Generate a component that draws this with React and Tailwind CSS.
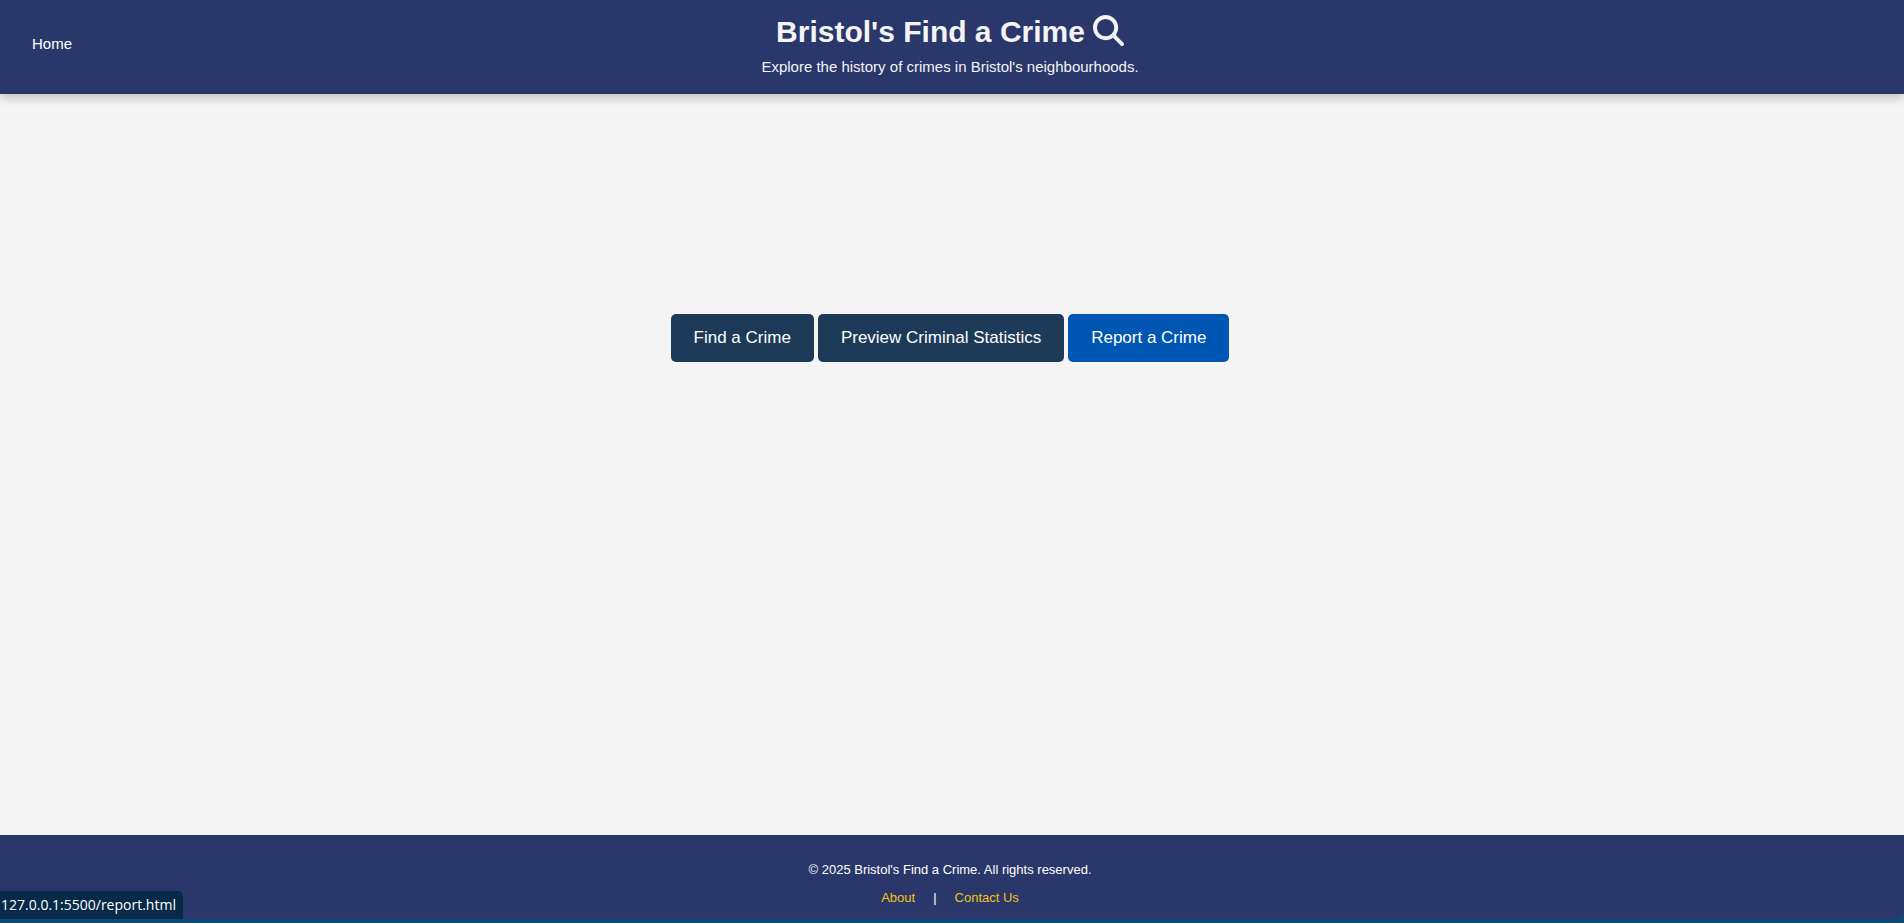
import { FaMagnifyingGlass } from "react-icons/fa6";

export default function App() {
  return (
    <div className="flex min-h-screen flex-col bg-[#0a4a7a] font-['Liberation_Sans',Arial,sans-serif] text-[#f4f4f4]">
      <header className="relative z-10 flex items-start justify-center bg-[#2a376b] pb-[15px] pr-1 pt-3 shadow-[0_4px_10px_rgba(0,0,0,0.2)]">
        <nav className="absolute left-8 top-8">
          <a href="#home" className="text-[15px] leading-6 text-white">Home</a>
        </nav>
        <div className="flex flex-col items-center">
          <h1 className="flex items-start gap-2 text-[30px] font-bold leading-10">
            Bristol's Find a Crime <FaMagnifyingGlass aria-hidden="true" className="mt-[3px] size-[31px]" />
          </h1>
          <p className="mt-[3px] text-[15px] leading-6">Explore the history of crimes in Bristol's neighbourhoods.</p>
        </div>
      </header>
      <main className="flex grow flex-wrap content-start items-start justify-center gap-1 bg-[#f4f4f4] pr-1 pt-[220px] text-[17px] leading-6 text-white">
        <a href="#find" className="rounded-[5px] bg-[#1d3a58] px-[23px] py-3">Find a Crime</a>
        <a href="#stats" className="rounded-[5px] bg-[#1d3a58] px-[23px] py-3">Preview Criminal Statistics</a>
        <a href="#report" className="rounded-[5px] bg-[#0056b3] px-[23px] py-3">Report a Crime</a>
      </main>
      <footer className="relative mb-1 flex flex-col items-center gap-2 rounded-br-lg bg-[#2a376b] pb-[11px] pr-1 pt-[25px] text-[13px] leading-5 text-white">
        <p>© 2025 Bristol's Find a Crime. All rights reserved.</p>
        <nav className="flex gap-[18px]">
          <a href="#about" className="text-[#f1c40f]">About</a>
          <span>|</span>
          <a href="#contact" className="text-[#f1c40f]">Contact Us</a>
        </nav>
        <div className="absolute bottom-0 left-0 rounded-tr-[5px] bg-[#062a48] py-1 pl-px pr-[7px] font-['Open_Sans',sans-serif] text-sm leading-5">
          127.0.0.1:5500/report.html
        </div>
      </footer>
    </div>
  );
}
